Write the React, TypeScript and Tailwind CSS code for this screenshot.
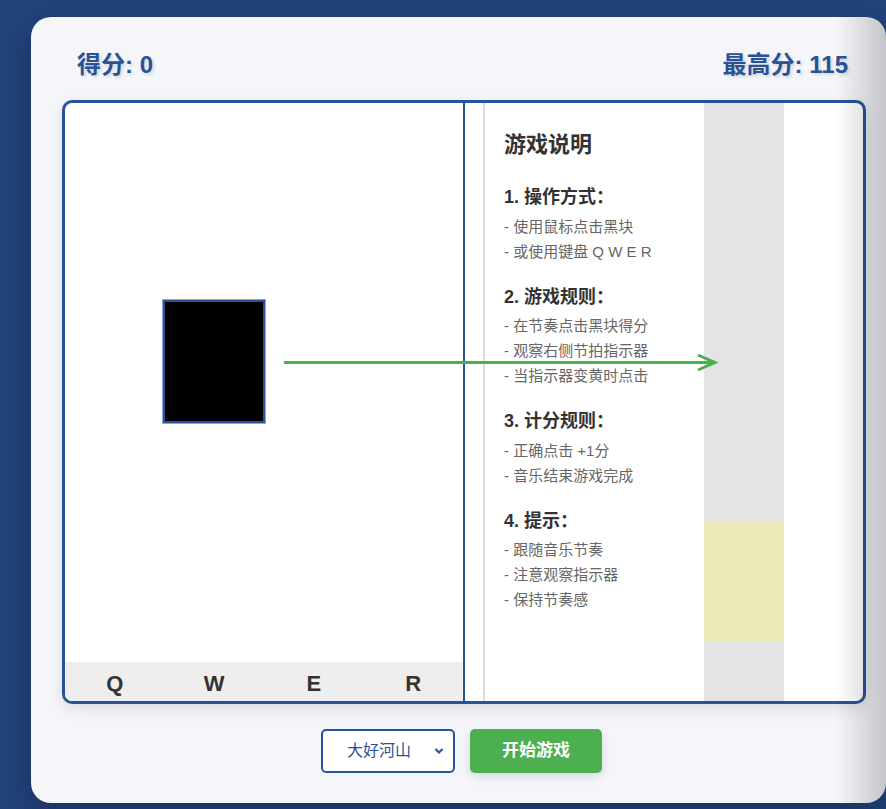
const lanes = ["Q", "W", "E", "R"];

const sections = [
  { title: "1. 操作方式：", items: ["- 使用鼠标点击黑块", "- 或使用键盘 Q W E R"] },
  {
    title: "2. 游戏规则：",
    items: ["- 在节奏点击黑块得分", "- 观察右侧节拍指示器", "- 当指示器变黄时点击"],
  },
  { title: "3. 计分规则：", items: ["- 正确点击 +1分", "- 音乐结束游戏完成"] },
  { title: "4. 提示：", items: ["- 跟随音乐节奏", "- 注意观察指示器", "- 保持节奏感"] },
];

const App = () => {
  return (
    <div
      className="min-h-[809px] w-[886px] overflow-hidden bg-[#22427c] pt-[17px] pl-[31px]"
      style={{ fontFamily: '"Liberation Sans", "Noto Sans CJK SC", sans-serif' }}
    >
      <div className="relative flex w-[855px] flex-col overflow-hidden rounded-[20px] bg-[#f4f6fa] pt-[33px] pb-[30px] pl-[31px] shadow-[0_10px_30px_rgba(0,0,0,0.25)]">
        <div className="flex h-[30px] w-[804px] items-center justify-between px-[15px] text-[24px] font-bold text-[#2a5298] [text-shadow:2px_2px_3px_rgba(0,0,0,0.12)]">
          <span>得分: 0</span>
          <span className="pr-[3px]">最高分: 115</span>
        </div>

        <div className="relative mt-[20px] flex h-[604px] w-[804px] overflow-hidden rounded-[10px] border-[3px] border-[#2a5298] bg-white shadow-[0_5px_15px_rgba(0,0,0,0.1)]">
          <div className="relative flex w-[400px] flex-col border-r-2 border-[#2a5298]">
            <div className="relative flex-1">
              <div className="absolute top-[197px] left-[98px] h-[123px] w-[102px] border-2 border-[#2a5298] bg-black shadow-[0_0_0_1px_#8fa6cf]" />
            </div>
            <div className="flex h-[39px] bg-[#eeeeee] text-[22px] font-bold text-[#333]">
              {lanes.map((k) => (
                <div key={k} className="flex flex-1 items-center justify-center pt-[4px]">
                  {k}
                </div>
              ))}
            </div>
          </div>

          <div className="w-[18px]" />
          <div className="w-[2px] bg-[#dddddd]" />

          <div className="w-[219px] pt-[27px] pl-[19px]">
            <h2 className="text-[22px] leading-[30px] font-bold text-[#333]">游戏说明</h2>
            {sections.map((s, i) => (
              <div key={s.title} className={i === 0 ? "mt-[24px]" : "mt-[20px]"}>
                <h3 className="text-[18px] leading-[26px] font-bold text-[#333]">{s.title}</h3>
                <ul className="mt-[3.5px] text-[15px] leading-[25px] text-[#666]">
                  {s.items.map((it) => (
                    <li key={it}>{it}</li>
                  ))}
                </ul>
              </div>
            ))}
          </div>

          <div className="relative w-[80px] bg-[#e4e4e4]">
            <div className="absolute top-[418px] left-0 h-[120px] w-full bg-[#ebeab8]" />
          </div>
          <div className="flex-1" />

          <svg
            className="pointer-events-none absolute top-[249px] left-[219px]"
            width="436"
            height="22"
            viewBox="0 0 436 22"
          >
            <line x1="0" y1="10.5" x2="430" y2="10.5" stroke="#4caf50" strokeWidth="3" />
            <polyline
              points="414,3 431,10.5 414,18"
              fill="none"
              stroke="#4caf50"
              strokeWidth="3"
            />
          </svg>
        </div>

        <div className="mt-[25px] flex w-[804px] justify-center gap-[15px] pr-[5px]">
          <div className="relative">
            <select className="h-[44px] w-[134px] appearance-none rounded-[5px] border-2 border-[#2a5298] bg-white pl-[24px] text-[16px] text-[#2a5298] outline-none">
              <option>大好河山</option>
            </select>
            <svg
              className="pointer-events-none absolute top-[18px] right-[11px]"
              width="10"
              height="8"
              viewBox="0 0 10 8"
            >
              <polyline points="1.5,2 5,5.5 8.5,2" fill="none" stroke="#2a5298" strokeWidth="2.2" />
            </svg>
          </div>
          <button className="h-[44px] w-[132px] rounded-[5px] bg-[#4caf50] text-[17px] font-bold text-white shadow-[0_4px_10px_rgba(0,0,0,0.12)]">
            开始游戏
          </button>
        </div>

        <div className="pointer-events-none absolute top-0 right-0 h-full w-[50px] bg-linear-to-r from-transparent to-black/20" />
      </div>
    </div>
  );
};

export default App;
